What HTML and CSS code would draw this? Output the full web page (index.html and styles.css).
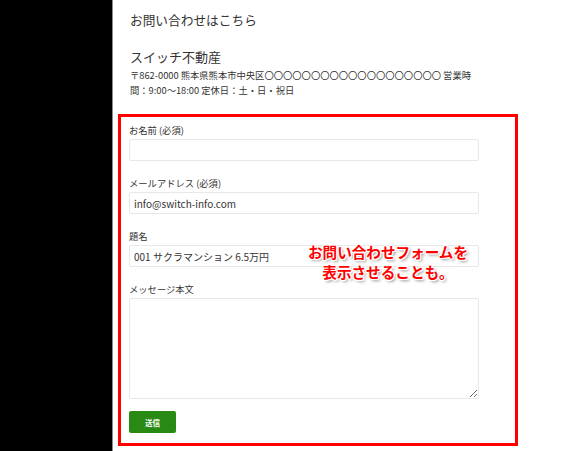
FILE: index.html
```html
<!DOCTYPE html>
<html lang="ja">
<head>
<meta charset="utf-8">
<link rel="stylesheet" href="styles.css">
</head>
<body>
<div class="page">
  <div class="side"></div>
  <div class="content">
    <h1 class="title">お問い合わせはこちら</h1>
    <h2 class="company">スイッチ不動産</h2>
    <p class="address">〒862-0000 熊本県熊本市中央区〇〇〇〇〇〇〇〇〇〇〇〇〇〇〇〇〇〇〇 営業時間：9:00〜18:00 定休日：土・日・祝日</p>
    <form class="form">
      <div class="field">
        <label class="label">お名前 (必須)</label>
        <input class="input" type="text" value="">
      </div>
      <div class="field">
        <label class="label">メールアドレス (必須)</label>
        <input class="input" type="text" value="info@switch-info.com">
      </div>
      <div class="field">
        <label class="label">題名</label>
        <input class="input" type="text" value="001 サクラマンション 6.5万円">
      </div>
      <div class="field field-last">
        <label class="label">メッセージ本文</label>
        <textarea class="textarea"></textarea>
      </div>
      <button class="submit" type="button">送信</button>
      <div class="note">お問い合わせフォームを<br>表示させることも。</div>
    </form>
  </div>
</div>
</body>
</html>
```
FILE: styles.css
```css
* { box-sizing: border-box; }
html, body { margin: 0; padding: 0; background: #fff; }
body {
  font-family: "Noto Sans CJK JP", "Noto Sans", "Liberation Sans", sans-serif;
  color: #333;
}
.page {
  display: flex;
  width: 580px;
  height: 451px;
  overflow: hidden;
}
.side {
  width: 113px;
  flex: none;
  background: #000;
  border-right: 1px solid #8a8a8a;
}
.content {
  flex: 1;
  padding: 12px 0 0 17px;
}
.title {
  margin: 0;
  font-size: 12.7px;
  line-height: 16px;
  font-weight: normal;
}
.company {
  margin: 21px 0 0;
  font-size: 13px;
  line-height: 16px;
  font-weight: normal;
}
.address {
  margin: 3px 0 0;
  width: 345px;
  font-size: 9.3px;
  line-height: 15px;
}
.form {
  position: relative;
  margin: 16px 0 0 -12px;
  width: 400px;
  border: 3px solid #ff0000;
  padding: 7px 8px 10px;
}
.field {
  display: flex;
  flex-direction: column;
  gap: 3px;
  margin-bottom: 16px;
}
.field-last { margin-bottom: 12px; }
.label {
  font-size: 9.3px;
  line-height: 12px;
}
.input {
  width: 350px;
  height: 22px;
  border: 1px solid #e8e8e8;
  border-radius: 2px;
  padding: 0 4px;
  font-family: "Noto Sans CJK JP", "Noto Sans", sans-serif;
  font-size: 10px;
  color: #333;
  background: #fff;
  outline: none;
}
.textarea {
  width: 350px;
  height: 101px;
  border: 1px solid #e8e8e8;
  border-radius: 2px;
  background: #fff;
  outline: none;
  margin: 0;
  display: block;
}
.submit {
  display: block;
  width: 47px;
  height: 22px;
  border: none;
  border-radius: 2px;
  background: #288a12;
  color: #fff;
  font-family: "Noto Sans CJK JP", sans-serif;
  font-size: 7.5px;
  font-weight: bold;
  padding: 0;
}
.note {
  position: absolute;
  left: 180px;
  top: 125px;
  width: 174px;
  text-align: center;
  color: #ff0000;
  font-size: 14.6px;
  line-height: 20px;
  font-weight: bold;
  text-shadow:
    1px 0 0 #fff, -1px 0 0 #fff, 0 1px 0 #fff, 0 -1px 0 #fff,
    1px 1px 0 #fff, -1px -1px 0 #fff, 1px -1px 0 #fff, -1px 1px 0 #fff,
    2px 2px 3px rgba(0,0,0,0.45);
  white-space: nowrap;
}
```
